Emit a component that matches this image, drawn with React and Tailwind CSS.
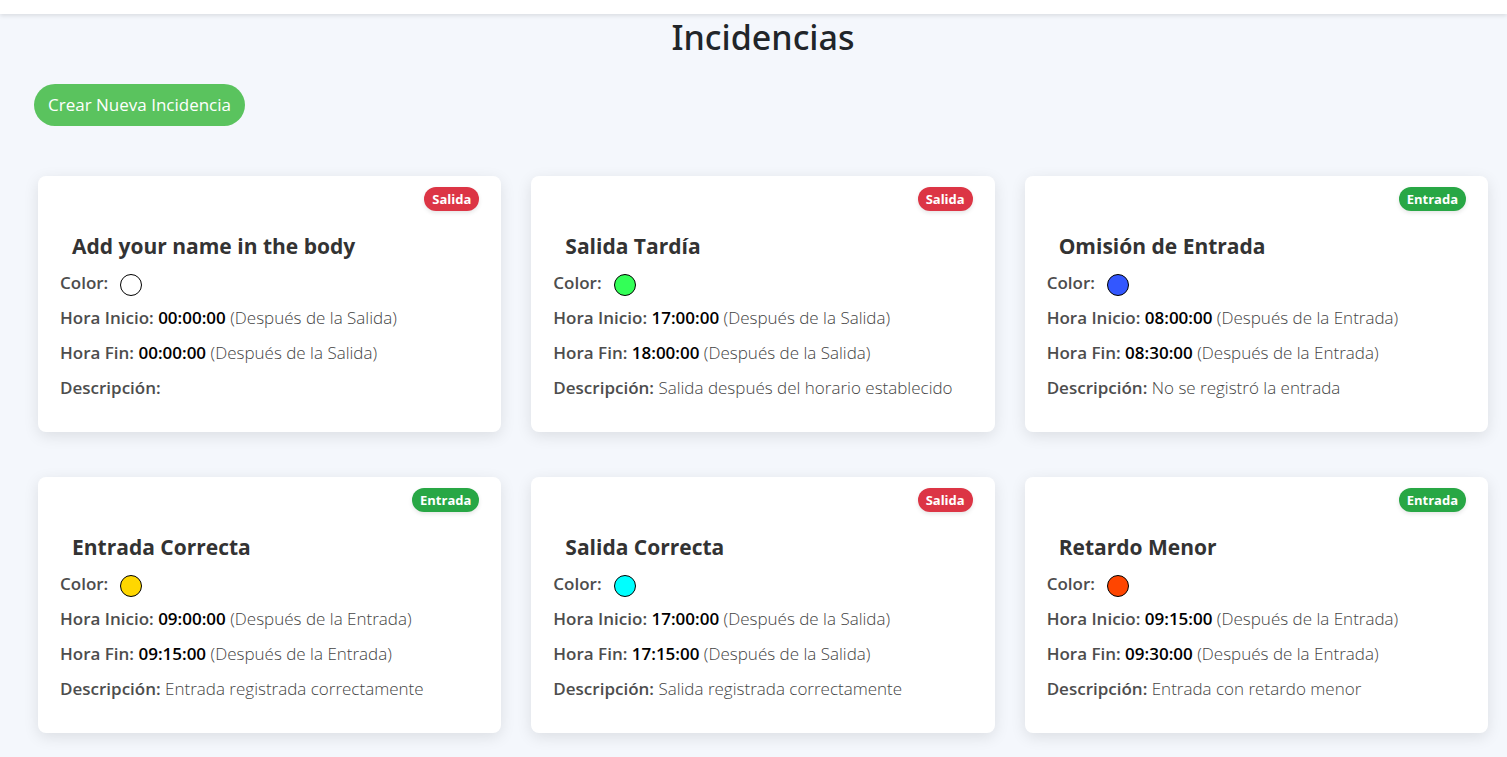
const incidencias = [
  { nombre: 'Add your name in the body', tipo: 'Salida', color: '#ffffff', inicio: '00:00:00', fin: '00:00:00', descripcion: '' },
  { nombre: 'Salida Tardía', tipo: 'Salida', color: '#33ff57', inicio: '17:00:00', fin: '18:00:00', descripcion: 'Salida después del horario establecido' },
  { nombre: 'Omisión de Entrada', tipo: 'Entrada', color: '#3357ff', inicio: '08:00:00', fin: '08:30:00', descripcion: 'No se registró la entrada' },
  { nombre: 'Entrada Correcta', tipo: 'Entrada', color: '#ffd700', inicio: '09:00:00', fin: '09:15:00', descripcion: 'Entrada registrada correctamente' },
  { nombre: 'Salida Correcta', tipo: 'Salida', color: '#00ffff', inicio: '17:00:00', fin: '17:15:00', descripcion: 'Salida registrada correctamente' },
  { nombre: 'Retardo Menor', tipo: 'Entrada', color: '#ff4500', inicio: '09:15:00', fin: '09:30:00', descripcion: 'Entrada con retardo menor' },
];

function Etiqueta({ children }) {
  return <strong className="font-semibold text-[#4d4d4d]">{children}</strong>;
}

function Hora({ etiqueta, hora, tipo }) {
  return (
    <p>
      <Etiqueta>{etiqueta}</Etiqueta>{' '}
      <span className="font-semibold text-black">{hora}</span> (Después de la {tipo})
    </p>
  );
}

function Tarjeta({ nombre, tipo, color, inicio, fin, descripcion }) {
  return (
    <article className="flex flex-col rounded-lg bg-white px-[22px] pt-[11px] pb-[33px] shadow-[0_4px_15px_rgba(0,0,0,0.1)]">
      <span
        className={`self-end rounded-full px-2 text-[13px] leading-6 font-bold text-white shadow-[0_2px_4px_rgba(0,0,0,0.1)] ${
          tipo === 'Entrada' ? 'bg-[#28a745]' : 'bg-[#dc3545]'
        }`}
      >
        {tipo}
      </span>
      <h2 className="mt-5 mb-[10px] pl-3 text-[21px] leading-[30px] font-bold text-[#333]">{nombre}</h2>
      <div className="flex flex-col gap-3 text-[17px] leading-[23px] font-light text-[#444]">
        <div className="flex h-[23px] items-start gap-3">
          <Etiqueta>Color:</Etiqueta>
          <span
            role="img"
            aria-label={`Color de ${nombre}`}
            className="mt-[3px] size-[22px] rounded-full border border-black"
            style={{ backgroundColor: color }}
          />
        </div>
        <Hora etiqueta="Hora Inicio:" hora={inicio} tipo={tipo} />
        <Hora etiqueta="Hora Fin:" hora={fin} tipo={tipo} />
        <p>
          <Etiqueta>Descripción:</Etiqueta> {descripcion}
        </p>
      </div>
    </article>
  );
}

export default function App() {
  return (
    <div className="min-h-screen bg-[#f4f7fc] font-['Open_Sans','Noto_Sans',sans-serif]">
      <header className="h-[14px] bg-white shadow-[0_2px_4px_rgba(0,0,0,0.1)]" />
      <main className="pr-[19px] pb-6 pl-[34px]">
        <h1 className="pl-1 text-center font-['Noto_Sans','Open_Sans',sans-serif] text-[34px] leading-[46px] font-medium text-[#212529]">
          Incidencias
        </h1>
        <button type="button" className="mt-6 h-[42px] rounded-full bg-[#5ac35e] px-[14px] text-[17px] text-white">
          Crear Nueva Incidencia
        </button>
        <section className="mt-[50px] grid grid-cols-3 gap-x-[30px] gap-y-[45px] pl-1">
          {incidencias.map((incidencia) => (
            <Tarjeta key={incidencia.nombre} {...incidencia} />
          ))}
        </section>
      </main>
    </div>
  );
}
